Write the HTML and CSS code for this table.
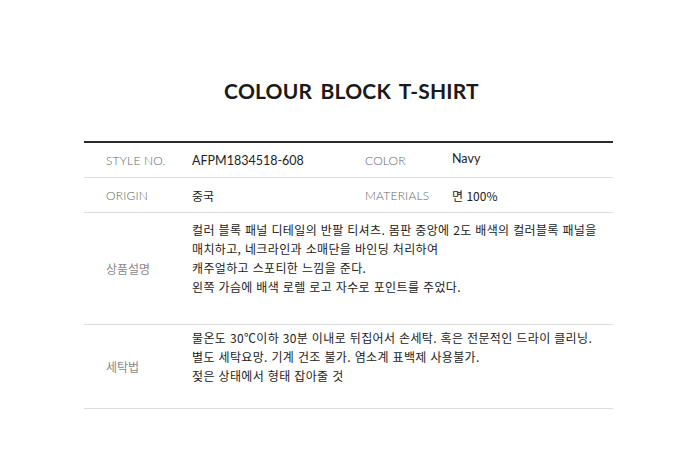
FILE: index.html
```html
<!DOCTYPE html>
<html lang="ko">
<head>
<meta charset="utf-8">
<link rel="stylesheet" href="styles.css">
</head>
<body>
<div class="page">
  <h1 class="title">COLOUR BLOCK T-SHIRT</h1>
  <div class="table">
    <div class="row row-short">
      <div class="label">STYLE NO.</div>
      <div class="value latin">AFPM1834518-608</div>
      <div class="label label2">COLOR</div>
      <div class="value latin navy">Navy</div>
    </div>
    <div class="row row-short">
      <div class="label">ORIGIN</div>
      <div class="value">중국</div>
      <div class="label label2">MATERIALS</div>
      <div class="value">면 100%</div>
    </div>
    <div class="row row-long row-desc">
      <div class="label ko">상품설명</div>
      <div class="text">컬러 블록 패널 디테일의 반팔 티셔츠. 몸판 중앙에 2도 배색의 컬러블록 패널을<br>매치하고, 네크라인과 소매단을 바인딩 처리하여<br>캐주얼하고 스포티한 느낌을 준다.<br>왼쪽 가슴에 배색 로렐 로고 자수로 포인트를 주었다.</div>
    </div>
    <div class="row row-long row-wash">
      <div class="label ko">세탁법</div>
      <div class="text">물온도 30℃이하 30분 이내로 뒤집어서 손세탁. 혹은 전문적인 드라이 클리닝.<br>별도 세탁요망. 기계 건조 불가. 염소계 표백제 사용불가.<br>젖은 상태에서 형태 잡아줄 것</div>
    </div>
  </div>
</div>
</body>
</html>
```

FILE: styles.css
```css
html, body {
  margin: 0;
  padding: 0;
  background: #fff;
}
body {
  font-family: "Noto Sans CJK KR", "Noto Sans", sans-serif;
  color: #222;
}
.page {
  width: 529px;
  margin: 0 0 0 84px;
  padding-top: 73px;
}
.title {
  margin: 0 0 33px 0;
  padding-left: 6px;
  text-align: center;
  font-family: "Lato", "DejaVu Sans", sans-serif;
  font-weight: 700;
  font-size: 21px;
  line-height: 35px;
  letter-spacing: 0.2px;
  word-spacing: 3px;
  color: #1a1a1a;
}
.table {
  border-top: 2px solid #2a2a2a;
}
.row {
  display: grid;
  grid-template-columns: 108px 173px 87px 1fr;
  border-bottom: 1px solid #dcdcdc;
  align-items: center;
}
.row-short {
  height: 34px;
}
.row-long {
  grid-template-columns: 108px 1fr;
}
.row-desc {
  height: 111px;
}
.row-wash {
  height: 83px;
}
.label {
  padding-left: 22px;
  font-family: "Lato", "Noto Sans", sans-serif;
  font-weight: 300;
  font-size: 12px;
  color: #666;
  letter-spacing: 0.2px;
}
.label2 {
  padding-left: 0;
}
.label.ko {
  font-family: "Noto Sans CJK KR", sans-serif;
  font-weight: 400;
  font-size: 12px;
  color: #888;
  letter-spacing: 0;
}
.value {
  font-size: 12px;
  color: #222;
}
.latin {
  font-family: "Lato", "Noto Sans", sans-serif;
  font-size: 12.5px;
  font-weight: 400;
}
.navy {
  margin-top: -4px;
}
.text {
  align-self: start;
  font-size: 12px;
  line-height: 19px;
  letter-spacing: 0.35px;
  color: #222;
  white-space: nowrap;
}
.row-desc .text {
  padding-top: 7px;
}
.row-wash .text {
  padding-top: 3px;
}
```
